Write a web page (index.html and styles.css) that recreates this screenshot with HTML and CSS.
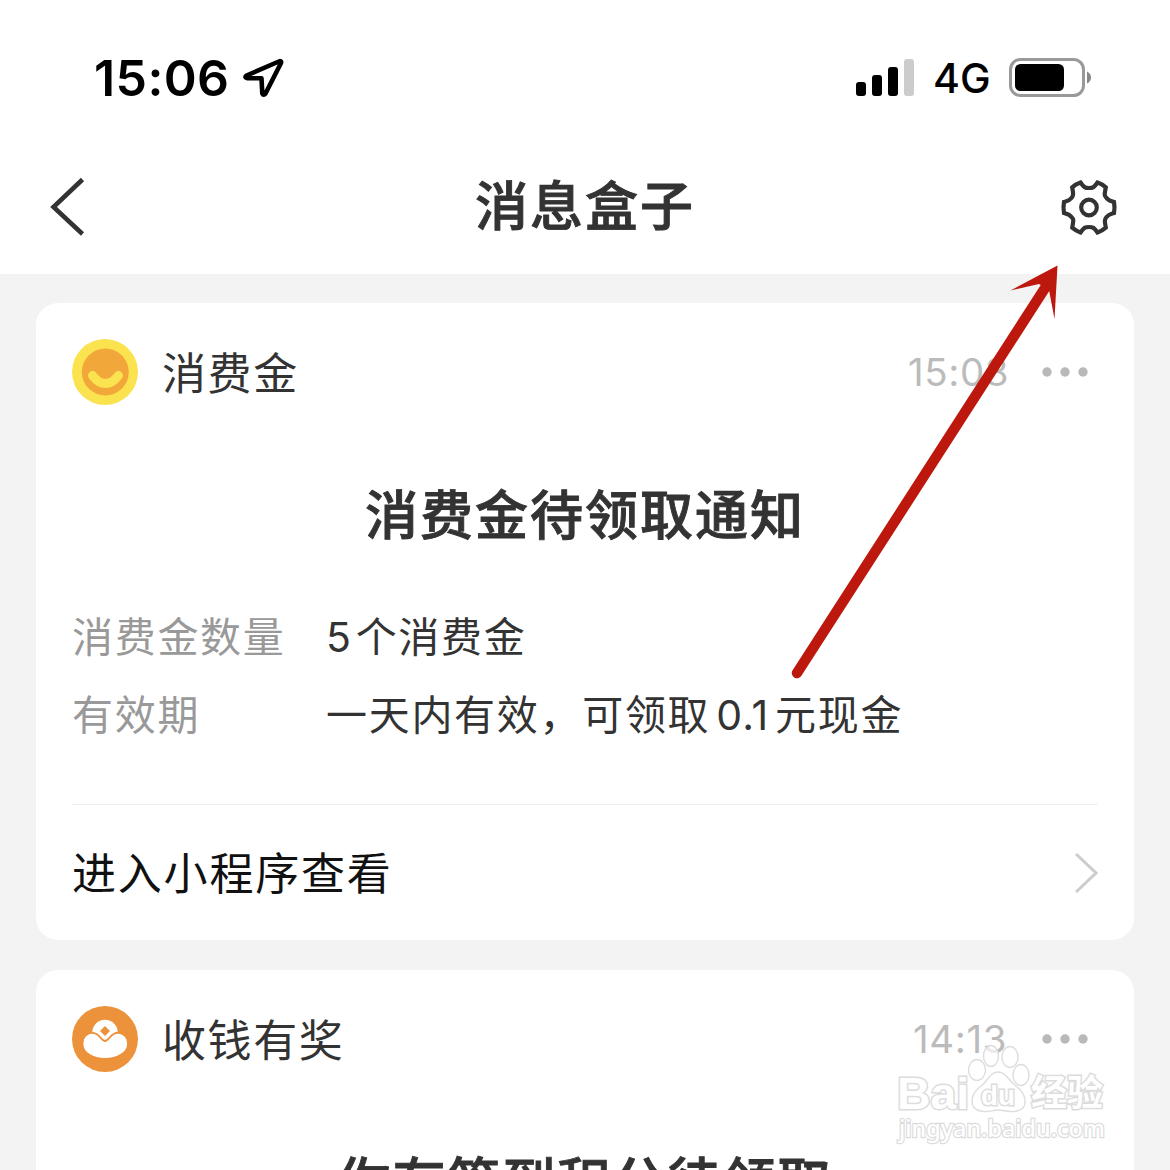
FILE: index.html
```html
<!DOCTYPE html>
<html lang="zh-CN">
<head>
<meta charset="utf-8">
<title>消息盒子</title>
<link rel="stylesheet" href="styles.css">
</head>
<body>
<div class="screen">
  <header class="top">
    <div class="status">
      <div class="status-left">
        <span class="clock">15:06</span>
        <svg class="location" width="42" height="42" viewBox="0 0 42 42"><path d="M38 4 4.500 18.500Q2 20.500 5.500 21.300L19.500 21.300 20.300 36.500Q21.500 39 23.500 36.500L39 6Q39.500 4 38 4Z" fill="none" stroke="#000" stroke-width="4.600" stroke-linejoin="round"/></svg>
      </div>
      <div class="status-right">
        <svg width="60" height="40" viewBox="0 0 60 40"><rect x="1" y="25" width="10" height="14" rx="3"/><rect x="17" y="18" width="10" height="21" rx="3"/><rect x="33" y="10" width="10" height="29" rx="3"/><rect x="49" y="2" width="10" height="37" rx="3" fill="#ccc"/></svg>
        <span class="network">4G</span>
        <svg class="battery" width="84" height="40" viewBox="0 0 84 40"><rect x="2.500" y="2.500" width="73" height="36" rx="10" fill="none" stroke="#999" stroke-width="3"/><rect x="7" y="7" width="49" height="27" rx="5.500"/><path d="M79 14.500q4 2 4 6t-4 6z" fill="#888"/></svg>
      </div>
    </div>
    <nav class="nav">
      <svg width="40" height="60" viewBox="0 0 40 60"><path d="M34.500 2.500 5.500 30l29 27" fill="none" stroke="#333" stroke-width="4.600"/></svg>
      <h1 class="nav-title">消息盒子</h1>
      <svg width="60" height="60" viewBox="-30 -30.500 60 60"><g fill="none" stroke="#333" stroke-width="4.200"><path d="M-8.500 -25C-5 -20 -4 -19.500 0 -19.500S5 -20 8.500 -25Q13 -23.500 16.800 -20.200C15.500 -13 15 -12 17.500 -9.500S20 -7 25 -5.500Q26 0 25 5.500C20 7 19.500 7 17.500 9.500S15.500 13 16.800 20.200Q13 23.500 8.500 25C5 20 4 19.500 0 19.500S-5 20 -8.500 25Q-13 23.500 -16.800 20.200C-15.500 13 -15 12 -17.500 9.500S-20 7 -25 5.500Q-26 0 -25 -5.500C-20 -7 -19.500 -7 -17.500 -9.500S-15.500 -13 -16.800 -20.200Q-13 -23.500 -8.500 -25Z"/><circle r="7.800"/></g></svg>
    </nav>
  </header>
  <main class="feed">
    <article class="card">
      <div class="card-head">
        <svg width="66" height="66" viewBox="0 0 66 66"><circle cx="33" cy="33" r="33" fill="#fae34f"/><circle cx="33.300" cy="33" r="23.500" fill="#f2a73b"/><path d="M20.500 36.500Q26.500 44.500 33.500 44.500T46.500 36.500" fill="none" stroke="#fae34f" stroke-width="9" stroke-linecap="round"/></svg>
        <span class="source">消费金</span>
        <time class="time">15:08</time>
        <svg class="dots" width="48" height="10" viewBox="0 0 48 10"><circle cx="6" cy="5" r="4.700"/><circle cx="24" cy="5" r="4.700"/><circle cx="42" cy="5" r="4.700"/></svg>
      </div>
      <h2 class="card-title">消费金待领取通知</h2>
      <dl class="details">
        <dt>消费金数量</dt><dd><span class="num count">5</span>个消费金</dd>
        <dt>有效期</dt><dd>一天内有效，可领取<span class="num amount">0.1</span>元现金</dd>
      </dl>
      <a class="card-link"><span>进入小程序查看</span><svg width="26" height="42" viewBox="0 0 26 42"><path d="m4 2 20 19L4 40" fill="none" stroke="#ccc" stroke-width="3"/></svg></a>
    </article>
    <article class="card">
      <div class="card-head">
        <svg width="66" height="66" viewBox="0 0 66 66"><circle cx="33" cy="33" r="33" fill="#ec923b"/><circle cx="33" cy="26.500" r="12.700" fill="#fff"/><path d="m33 20 5 5-5 5-5-5z" fill="#ec923b"/><path d="M10.500 38C10.500 28 19 25 24.500 28 28.500 30.500 30 35 33 35S37.500 30.500 41.500 28C47 25 56 28 56 38 56 47 45 53 33 53S10.500 47 10.500 38Z" fill="#fff" stroke="#ec923b" stroke-width="1.800"/></svg>
        <span class="source">收钱有奖</span>
        <time class="time late">14:13</time>
        <svg class="dots" width="48" height="10" viewBox="0 0 48 10"><circle cx="6" cy="5" r="4.700"/><circle cx="24" cy="5" r="4.700"/><circle cx="42" cy="5" r="4.700"/></svg>
      </div>
      <h2 class="card-title">你有签到积分待领取</h2>
    </article>
  </main>
  <svg class="pointer" width="280" height="420" viewBox="0 0 280 420"><path d="M17 413 265 28" stroke="#bd180d" stroke-width="10.500" stroke-linecap="round"/><path d="M277.500 5.500 230.500 30.500 259 24 269 30 274.500 59Z" fill="#bd180d"/></svg>
  <svg class="watermark" width="220" height="110" viewBox="0 0 220 110">
    <g fill="#fff" stroke="#ddd" stroke-width="1.400">
      <ellipse cx="87" cy="30" rx="8.500" ry="10.500"/><ellipse cx="101" cy="16" rx="7.500" ry="10.500" fill-opacity=".7"/><ellipse cx="120" cy="17" rx="8" ry="10.500"/><ellipse cx="131" cy="35" rx="8" ry="10.500"/>
      <path d="M108 32C116 32 119 41 126 46 138 55 138 69 127 71 119 73 114 70 108 70S97 73 91 71C79 69 79 55 91 46 98 41 100 32 108 32Z"/>
    </g>
    <g class="mark-text">
      <text class="latin" x="7" y="69" font-size="45" textLength="72" lengthAdjust="spacingAndGlyphs">Bai</text>
      <text class="latin" x="91" y="65" font-size="28" textLength="34" lengthAdjust="spacingAndGlyphs">du</text>
      <text class="cjk" x="141" y="66" font-size="36" textLength="72">经验</text>
      <text class="url" x="9" y="97" font-size="24" textLength="206" lengthAdjust="spacingAndGlyphs">jingyan.baidu.com</text>
    </g>
  </svg>
</div>
</body>
</html>
```
FILE: styles.css
```css
* { box-sizing: border-box; }
body {
  margin: 0;
  background: #f3f3f3;
  color: #333;
  font-family: Inter, "Noto Sans CJK SC", sans-serif;
}
h1, h2, dl, dd { margin: 0; }
svg { display: block; flex: none; }
.screen {
  position: relative;
  width: 1170px;
  height: 1170px;
  overflow: hidden;
}
.top { height: 274px; background: #fff; }
.status {
  height: 156px;
  padding: 0 78px 0 94px;
  display: flex;
  align-items: center;
  justify-content: space-between;
  color: #000;
}
.status-left, .status-right { display: flex; align-items: center; }
.clock {
  width: 148px;
  font-size: 50px;
  font-weight: 600;
  line-height: 60px;
  letter-spacing: .4px;
}
.network {
  width: 93px;
  padding-left: 18px;
  font-size: 41px;
  font-weight: 500;
  line-height: 50px;
  white-space: nowrap;
}
.status-right { padding-bottom: 2px; }
.network { padding-top: 2px; }
.nav {
  height: 102px;
  padding: 0 51px 0 48px;
  display: flex;
  align-items: center;
  justify-content: space-between;
}
.nav-title {
  font: 500 53px/80px "Noto Sans CJK SC", sans-serif;
  letter-spacing: 2px;
  padding: 0 0 8px 23px;
  -webkit-text-stroke: .9px #333;
}
.feed {
  padding: 29px 36px 0;
  display: flex;
  flex-direction: column;
  gap: 30px;
}
.card {
  height: 637px;
  flex: none;
  padding: 36px;
  border-radius: 22px;
  background: #fff;
}
.card-head { display: flex; align-items: center; height: 66px; }
.source {
  flex: 1;
  padding: 0 0 3px 24px;
  font: 400 44px/66px "Noto Sans CJK SC", sans-serif;
  letter-spacing: 1.6px;
}
.time {
  width: 133px;
  font-size: 38.5px;
  line-height: 66px;
  letter-spacing: .6px;
  color: #bbb;
}
.late { width: 128px; }
.dots { margin-right: 9px; fill: #b9b9b9; }
.card-title {
  margin-top: 67px;
  text-align: center;
  font: 500 53px/80px "Noto Sans CJK SC", sans-serif;
  letter-spacing: 2px;
  -webkit-text-stroke: .9px #333;
}
.details {
  margin-top: 43px;
  display: grid;
  grid-template-columns: 254px 1fr;
  grid-auto-rows: 78px;
  font: 400 41px/78px "Noto Sans CJK SC", sans-serif;
  letter-spacing: 1.7px;
}
.details dt { color: #999; }
.num { font-family: Inter, sans-serif; }
.count { padding-right: 3px; }
.amount { letter-spacing: 1px; padding: 0 6px; }
.card-link {
  height: 136px;
  margin-top: 53px;
  border-top: 1px solid #eee;
  display: flex;
  align-items: center;
  justify-content: space-between;
  font: 400 44px/66px "Noto Sans CJK SC", sans-serif;
  letter-spacing: 1.8px;
  color: #111;
}
.card-link span { padding-bottom: 4px; }
.pointer { position: absolute; left: 780px; top: 260px; }
.watermark { position: absolute; left: 890px; top: 1040px; }
.mark-text {
  fill: #fff;
  stroke: #dcdcdc;
  stroke-width: 3px;
  paint-order: stroke;
}
.latin { font-family: "Liberation Sans", sans-serif; font-weight: 700; }
.cjk { font-family: "Noto Sans CJK SC", sans-serif; font-weight: 700; }
.url { font-family: "Noto Sans", sans-serif; font-weight: 500; stroke-width: 2.500px; }
```
